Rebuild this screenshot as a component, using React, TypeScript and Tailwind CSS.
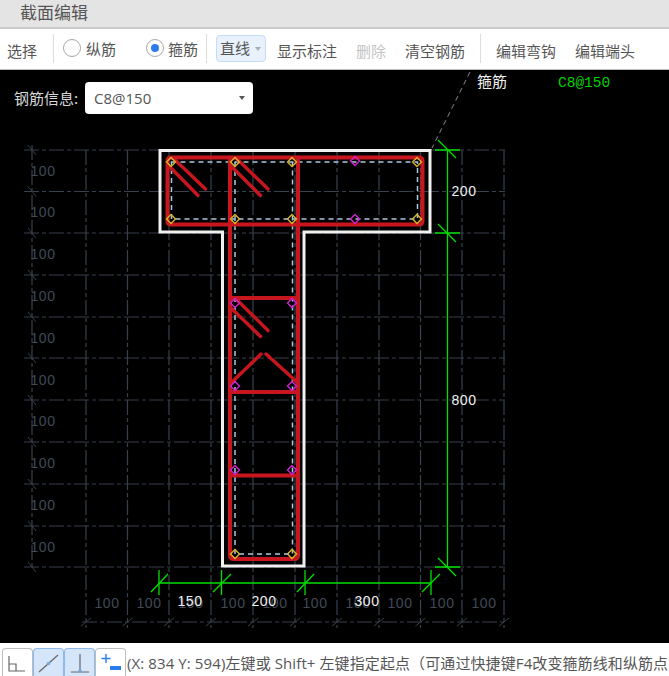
import React from 'react';

const font = '"Noto Sans CJK SC", "Liberation Sans", sans-serif';
const latinFont = '"Open Sans", "Noto Sans CJK SC", sans-serif';
const gridV = [86, 127.5, 169, 211, 253, 295, 337, 379, 420.5, 462, 504];
const gridH = [150, 191.5, 233, 275, 317, 358, 400, 442, 484, 526, 567];
const leftLabels = [171, 212, 254, 296, 338, 380, 421, 463, 505, 547];
const bottomLabels = [107, 149, 191, 233, 275, 315, 358, 400, 442, 484];

const yellowPts = [[171, 162], [235, 162], [292, 162], [417, 162], [171, 219], [235, 219], [292, 219], [417, 219], [235, 554], [292, 554]];
const magentaPts = [[355, 161], [355, 219], [235, 303], [292, 303], [235, 386], [292, 386], [235, 470], [292, 470]];

const Diamond: React.FC<{ x: number; y: number; color: string }> = ({ x, y, color }) => (
    <polygon points={`${x - 4.5},${y} ${x},${y - 4.5} ${x + 4.5},${y} ${x},${y + 4.5}`} fill="none" stroke={color} strokeWidth={1.4} />
);

const Drawing: React.FC = () => (
    <svg width={669} height={573} viewBox="0 70 669 573" className="block" style={{ fontFamily: '"Liberation Sans", sans-serif' }}>
        {/* grid */}
        <g stroke="#38414d" strokeWidth={1.2} fill="none" strokeDasharray="15 3 4 3">
            {gridH.map((y) => <line key={y} x1={24} y1={y} x2={505} y2={y} />)}
            {gridV.map((x) => <line key={x} x1={x} y1={150} x2={x} y2={628} />)}
            <line x1={32} y1={145} x2={32} y2={567} />
            <line x1={82} y1={622} x2={505} y2={622} />
        </g>
        <g stroke="#38414d" strokeWidth={1}>
            {gridH.map((y) => <line key={y} x1={28} y1={y - 5} x2={36} y2={y + 5} />)}
            {gridV.map((x) => <line key={x} x1={x - 5} y1={626} x2={x + 5} y2={618} />)}
        </g>
        <g fill="#414a56" fontSize={14} letterSpacing={0.6}>
            {leftLabels.map((y) => <text key={y} x={43} y={y + 5} textAnchor="middle">100</text>)}
            {bottomLabels.map((x) => <text key={x} x={x} y={608} textAnchor="middle">100</text>)}
        </g>

        {/* leader */}
        <line x1={470} y1={72} x2={432} y2={148} stroke="#8a8a8a" strokeWidth={1} strokeDasharray="5 4" />

        {/* concrete outline */}
        <path d="M160 150.500H430V232H304V566H222.500V232H160Z" fill="none" stroke="#f0f0f0" strokeWidth={3} />

        {/* stirrup centre line */}
        <g stroke="#a8c8e0" strokeWidth={1.5} fill="none" strokeDasharray="5 4">
            <path d="M171.500 162H417.500V219H171.500Z" />
            <path d="M235 162V554H292.500V162" />
        </g>

        {/* rebar */}
        <g stroke="#c8161f" strokeWidth={4} fill="none" strokeLinecap="round" strokeLinejoin="round">
            <path d="M171 157.500H419Q422.500 157.500 422.500 161V221Q422.500 224.500 419 224.500H171Q167.500 224.500 167.500 221V161Q167.500 157.500 171 157.500Z" />
            <path d="M230 157.500V555Q230 559 234 559H294Q298 559 298 555V157.500" />
            <path d="M230 298H298M230 392H298M230 475.500H298" />
        </g>
        <g stroke="#c8161f" strokeWidth={3.4} fill="none" strokeLinecap="round">
            <path d="M173 158L205.500 189M168 165L198 195.500" />
            <path d="M236 158L268 189M230 165L260.500 195.500" />
            <path d="M235 298L268 330.500M230 307L260.500 336.500" />
            <path d="M230 384L261 354M266 354L298 383" />
        </g>

        {yellowPts.map(([x, y]) => <Diamond key={`${x}-${y}`} x={x} y={y} color="#d8b52a" />)}
        {magentaPts.map(([x, y]) => <Diamond key={`${x}-${y}`} x={x} y={y} color="#d020d0" />)}

        {/* dimensions */}
        <g stroke="#00e000" strokeWidth={1.3} fill="none">
            <path d="M447.500 150V568" />
            <path d="M435 150H460M435 233H460M435 567H460" />
            <path d="M438 140L456 158M438 224L456 242M438 558L456 576" />
            <path d="M159 583H431" />
            <path d="M159 570V595M221.500 570V595M305 570V595M431 570V595" />
            <path d="M151 592L168 574M213 592L231 574M297 592L314 574M422 592L440 574" />
        </g>
        <g fill="#f0f0f0" fontSize={14} letterSpacing={0.6}>
            <text x={464} y={196} textAnchor="middle">200</text>
            <text x={464} y={405} textAnchor="middle">800</text>
            <text x={190} y={606} textAnchor="middle">150</text>
            <text x={264} y={606} textAnchor="middle">200</text>
            <text x={367} y={606} textAnchor="middle">300</text>
        </g>
        <text x={477} y={87} fill="#f0f0f0" fontSize={15} style={{ fontFamily: font }}>箍筋</text>
        <text x={558} y={87} fill="#00d000" fontSize={14.5} style={{ fontFamily: '"Liberation Mono", monospace' }}>C8@150</text>
    </svg>
);

const Radio: React.FC<{ checked?: boolean }> = ({ checked }) => (
    <span className="w-[18px] h-[18px] rounded-full border border-[#a8a8a8] bg-white flex items-center justify-center -mt-[6px]">
        {checked && <span className="w-[8px] h-[8px] rounded-full bg-[#2b7de9]" />}
    </span>
);

const Sep: React.FC<{ className: string }> = ({ className }) => <span className={`block w-px h-[29px] bg-[#dddddd] -mt-[6px] ${className}`} />;

const ToolBtn: React.FC<{ active?: boolean; children: React.ReactNode }> = ({ active, children }) => (
    <div className={`w-[31px] h-[28px] rounded-t border border-b-0 flex items-center justify-center ${active ? 'bg-[#d5e5fa] border-[#8db9ee]' : 'bg-white border-[#bdbdbd]'}`}>
        <svg width={26} height={24} viewBox="0 0 26 24">{children}</svg>
    </div>
);

export default function App() {
    return (
        <div className="w-[669px] h-[676px] flex flex-col overflow-hidden bg-white text-[#555555]" style={{ fontFamily: font }}>
            {/* Title */}
            <div className="h-[29px] bg-[#e5e4e4] border-b-2 border-[#c9cbcd] pl-5 text-[17px] leading-[24px] text-[#555555]">截面编辑</div>

            {/* Toolbar */}
            <div className="h-[41px] pt-[4px] flex items-center text-[15px] border-b border-[#bbbbbb] whitespace-nowrap">
                <span className="ml-[7px]">选择</span>
                <Sep className="ml-[16px]" />
                <span className="ml-[9px]"><Radio /></span>
                <span className="ml-[5px] -mt-1">纵筋</span>
                <span className="ml-[30px]"><Radio checked /></span>
                <span className="ml-[4px] -mt-1">箍筋</span>
                <Sep className="ml-[8px]" />
                <div className="ml-[9px] w-[50px] h-[27px] flex items-center pl-[3px] rounded bg-[#e8f1fc] border border-[#c5dcf5] -mt-[5px]">
                    直线
                    <span className="ml-[5px] w-0 h-0 border-x-[3px] border-x-transparent border-t-[4px] border-t-[#aaaaaa]" />
                </div>
                <span className="ml-[11px]">显示标注</span>
                <span className="ml-[19px] text-[#c4c4c4]">删除</span>
                <span className="ml-[19px]">清空钢筋</span>
                <Sep className="ml-[15px]" />
                <span className="ml-[15px]">编辑弯钩</span>
                <span className="ml-[19px]">编辑端头</span>
            </div>

            {/* Canvas */}
            <div className="relative h-[573px] bg-black">
                <Drawing />
                <div className="absolute left-[14px] top-[12px] h-[32px] flex items-center text-[15px] text-[#d8d8d8]">
                    <span className="w-[71px]">钢筋信息:</span>
                    <div className="w-[168px] h-[32px] rounded bg-white flex items-center justify-between pl-[9px] pr-[8px] text-[#555555]" style={{ fontFamily: latinFont }}>
                        C8@150
                        <span className="w-0 h-0 border-x-[3px] border-x-transparent border-t-[4px] border-t-[#555555]" />
                    </div>
                </div>
            </div>

            {/* Status */}
            <div className="flex-1 flex items-end pl-[2px] whitespace-nowrap overflow-hidden">
                <ToolBtn>
                    <path d="M4 5V20H20M4 13H11V20" fill="none" stroke="#666" strokeWidth={1.2} />
                </ToolBtn>
                <ToolBtn active>
                    <path d="M3 21L22 4" fill="none" stroke="#666" strokeWidth={1.2} />
                    <circle cx={12.500} cy={12.500} r={1.800} fill="#7aa7dc" />
                </ToolBtn>
                <ToolBtn active>
                    <path d="M13 3V20M4 21H22" fill="none" stroke="#666" strokeWidth={1.2} />
                    <circle cx={13} cy={20} r={1.800} fill="#7aa7dc" />
                </ToolBtn>
                <ToolBtn>
                    <path d="M8 3V12M3.500 7.500H12.500" fill="none" stroke="#2b7de9" strokeWidth={1.4} />
                    <rect x={12} y={15} width={11} height={4} fill="#2b7de9" />
                </ToolBtn>
                <span className="ml-[1px] self-center text-[15px] mt-[7px] tracking-[0.1px]" style={{ fontFamily: latinFont }}>(X: 834 Y: 594)左键或 Shift+ 左键指定起点（可通过快捷键F4改变箍筋线和纵筋点</span>
            </div>
        </div>
    );
}
